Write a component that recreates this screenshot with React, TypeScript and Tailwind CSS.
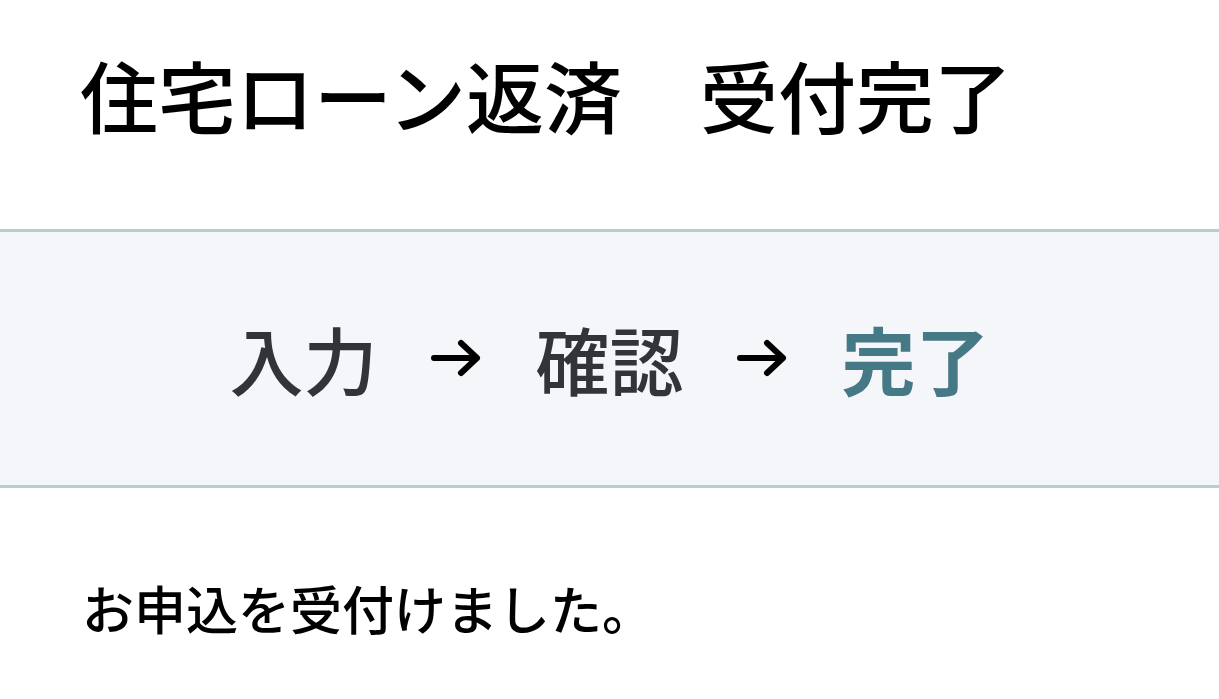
import React from "react";

function Arrow() {
  return (
    <svg width="52" height="40" viewBox="0 0 52 40" className="shrink-0">
      <path d="M3 20 H46 M30 5 L46 20 L30 35" fill="none" stroke="#000" strokeWidth="6" strokeLinecap="round" strokeLinejoin="round" />
    </svg>
  );
}

export default function App() {
  return (
    <div className="w-[1219px] h-[699px] bg-white overflow-hidden" style={{ fontFamily: '"Noto Sans CJK JP", "Noto Sans", sans-serif' }}>
      <div className="h-[229px] pl-[80px] pt-[40px]">
        <h1 className="text-[78px] leading-[108px] font-medium text-black whitespace-pre">住宅ローン返済　受付完了</h1>
      </div>
      <div className="h-[259px] bg-[#f4f6fa] border-y-[3px] border-[#b5cfcf] flex items-center justify-center">
        <div className="flex items-center text-[74px] leading-none gap-[53px] pb-[2px]">
          <span className="font-medium text-[#333438]">入力</span>
          <Arrow />
          <span className="font-medium text-[#333438]">確認</span>
          <Arrow />
          <span className="font-bold text-[#457985]">完了</span>
        </div>
      </div>
      <div className="pl-[82px] pt-[85px]">
        <p className="text-[52px] leading-[70px] font-medium text-black">お申込を受付けました。</p>
      </div>
    </div>
  );
}
